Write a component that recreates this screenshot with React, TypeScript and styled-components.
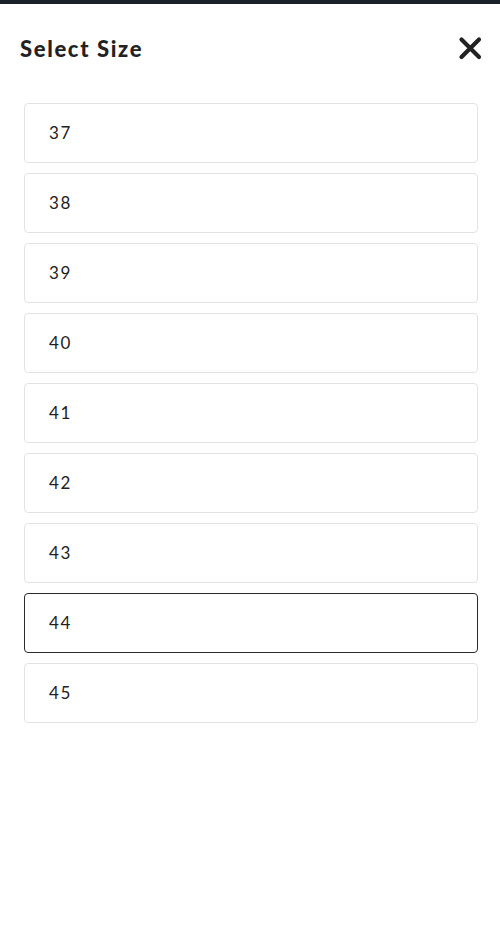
import React, { useState } from "react";
import styled, { createGlobalStyle } from "styled-components";

const GlobalStyle = createGlobalStyle`
  html, body {
    margin: 0;
    padding: 0;
    background: #ffffff;
    font-family: "Lato", "Noto Sans", sans-serif;
  }
`;

const TopBar = styled.div`
  height: 4px;
  background: #1b202b;
`;

const Sheet = styled.div`
  padding: 0 22px 0 24px;
`;

const Header = styled.div`
  display: flex;
  justify-content: space-between;
  align-items: center;
  height: 88px;
  margin-left: -4px;
  margin-right: -4px;
`;

const Title = styled.h1`
  margin: 0;
  font-family: "Lato", sans-serif;
  font-size: 22px;
  font-weight: 900;
  letter-spacing: 0.075em;
  color: #222;
`;

const CloseButton = styled.button`
  border: none;
  background: none;
  padding: 0;
  width: 24px;
  height: 24px;
  cursor: pointer;
  display: flex;
  align-items: center;
  justify-content: center;
`;

const List = styled.div`
  display: flex;
  flex-direction: column;
  gap: 10px;
  margin-top: 11px;
`;

const SizeRow = styled.div<{ $selected: boolean }>`
  height: 60px;
  box-sizing: border-box;
  display: flex;
  align-items: center;
  padding-left: 24px;
  padding-bottom: 1px;
  border: 1px solid ${(p) => (p.$selected ? "#2b2b2b" : "#e3e3e3")};
  border-radius: 4px;
  font-family: "Lato", sans-serif;
  font-size: 17px;
  letter-spacing: 0.09em;
  color: #222;
  cursor: pointer;
`;

const sizes = ["37", "38", "39", "40", "41", "42", "43", "44", "45"];

export default function App() {
  const [selected, setSelected] = useState("44");
  return (
    <>
      <GlobalStyle />
      <TopBar />
      <Sheet>
        <Header>
          <Title>Select Size</Title>
          <CloseButton aria-label="Close">
            <svg width="24" height="24" viewBox="0 0 24 24">
              <path
                d="M3.5 3.5 L21 21 M21 3.5 L3.5 21"
                stroke="#222"
                strokeWidth="4.2"
                strokeLinecap="round"
              />
            </svg>
          </CloseButton>
        </Header>
        <List>
          {sizes.map((s) => (
            <SizeRow
              key={s}
              $selected={s === selected}
              onClick={() => setSelected(s)}
            >
              {s}
            </SizeRow>
          ))}
        </List>
      </Sheet>
    </>
  );
}
